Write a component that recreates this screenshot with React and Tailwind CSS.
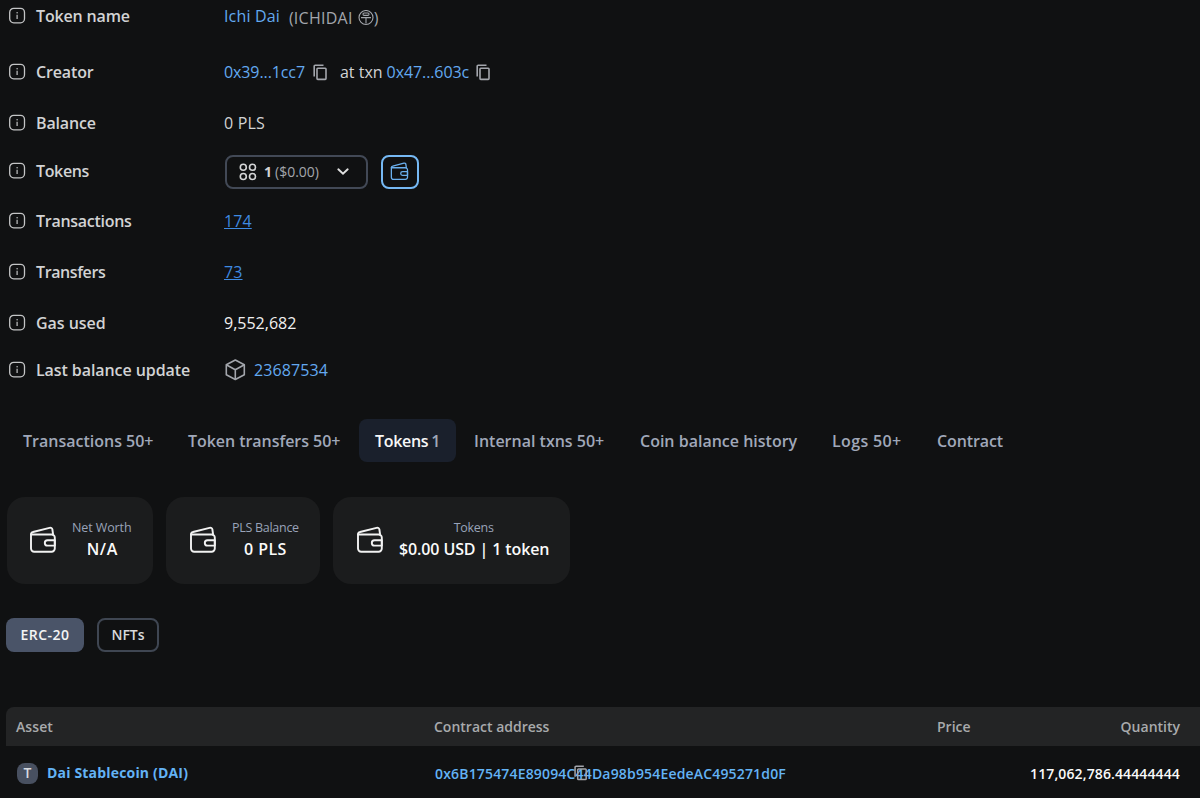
import React from 'react';

function InfoIcon() {
  return (
    <svg width="18" height="18" viewBox="0 0 18 18" fill="none" className="shrink-0">
      <rect x="1.7" y="1.4" width="14.8" height="14.4" rx="4" stroke="#c4c5c6" strokeWidth="1.3" />
      <path d="M9.1 7.8v4.2" stroke="#c4c5c6" strokeWidth="1.2" />
      <circle cx="9.1" cy="5.7" r="0.75" fill="#c4c5c6" />
    </svg>
  );
}

function WalletIcon({ className }) {
  return (
    <svg viewBox="0 0 28 28" fill="none" stroke="currentColor" strokeWidth="1.9" strokeLinejoin="round" strokeLinecap="round" className={className}>
      <path d="M2 8.500v14a3.200 3.200 0 0 0 3.200 3.200h17.400a3.200 3.200 0 0 0 3.200-3.200V11.700a3.200 3.200 0 0 0-3.200-3.200z" />
      <path d="M2 8.500C2 7 2.600 6.300 4 6L20.500 1.800c1.600-.4 2.700.3 2.900 1.700l.7 5" />
      <path d="M25.800 14.200h-7.300a2.700 2.700 0 0 0 0 5.400h7.300z" />
    </svg>
  );
}

function GridIcon() {
  return (
    <svg width="18" height="18" viewBox="0 0 18 18" fill="none" stroke="#d4d5d6" strokeWidth="1.6">
      <circle cx="4.300" cy="4.300" r="3" />
      <circle cx="13.500" cy="4.300" r="3" />
      <circle cx="4.300" cy="13.500" r="3" />
      <circle cx="13.500" cy="13.500" r="3" />
    </svg>
  );
}

function CubeIcon() {
  return (
    <svg width="22" height="24" viewBox="0 0 22 24" fill="none" stroke="#a3a6ac" strokeWidth="1.600" strokeLinejoin="round" strokeLinecap="round">
      <path d="M11.300 2 20.300 6.800v9.900L11.300 21.500 2.300 16.700V6.800z" />
      <path d="M2.700 7 11.300 11.700l8.600-4.700M11.300 11.700v9.500" />
    </svg>
  );
}

function SealIcon() {
  return (
    <svg width="16" height="16" viewBox="0 0 16 16" fill="none" stroke="#a3a6ac" strokeWidth="1.100">
      <circle cx="8" cy="7.500" r="7" />
      <rect x="5" y="3" width="6" height="2.400" rx="1.100" />
      <path d="M3 7.600h10M8 7.600v5.800" />
    </svg>
  );
}

function CopyIcon({ className }) {
  return (
    <svg viewBox="0 0 17 17" fill="none" stroke="#a3a6ac" strokeWidth="1.600" strokeLinejoin="round" className={className}>
      <path d="M11.500 1.300H3.200a1 1 0 0 0-1 1V12.500" />
      <rect x="5" y="4.200" width="9" height="11.200" rx="0.800" />
    </svg>
  );
}

function Row({ label, className, labelClass, children }) {
  return (
    <div className={`flex h-6 items-center pl-2 ${className}`}>
      <InfoIcon />
      <div className={`ml-2.5 w-[188px] shrink-0 whitespace-nowrap font-semibold text-[#d2d3d4] ${labelClass}`}>{label}</div>
      <div className="flex items-center whitespace-nowrap text-[#d2d3d4]">{children}</div>
    </div>
  );
}

function Tab({ className, children }) {
  return <div className={`mr-0.5 flex h-[43px] shrink-0 items-center whitespace-nowrap rounded-lg pl-4 text-[#a0a8b9] ${className}`}>{children}</div>;
}

function Card({ className, title, value, valueClass, titleClass }) {
  return (
    <div className={`flex h-[87px] items-center rounded-[18px] bg-[#1b1c1d] pb-[2px] ${className}`}>
      <WalletIcon className="size-7 shrink-0 text-[#f2f2f2]" />
      <div className="ml-[14px] flex flex-col items-center whitespace-nowrap">
        <div className={`text-[12.500px] leading-[20px] text-[#99a3b9] ${titleClass}`}>{title}</div>
        <div className={`leading-[23px] font-semibold text-[#fafafa] ${valueClass}`}>{value}</div>
      </div>
    </div>
  );
}

export default function App() {
  return (
    <div className="h-[798px] w-[1200px] overflow-hidden bg-[#101112] font-['Open_Sans','Noto_Sans',sans-serif] text-[16px] leading-6">
      <div className="flex flex-col pt-1">
        <Row label="Token name" className="" labelClass="tracking-[-0.15px]">
          <span className="tracking-[0.15px] text-[#63a9f0]">Ichi Dai</span>
          <span className="ml-[9px] flex items-center pt-[3px] text-[#a3a6ac]">
            <span className="mr-[5px] tracking-[0.25px]">(ICHIDAI</span>
            <SealIcon />
            <span>)</span>
          </span>
        </Row>
        <Row label="Creator" className="mt-8" labelClass="tracking-[-0.15px]">
          <span className="tracking-[-0.1px] text-[#63a9f0]">0x39...1cc7</span>
          <CopyIcon className="ml-[7px] size-[17px]" />
          <span className="ml-[11px]">at txn</span>
          <span className="ml-1 tracking-[-0.1px] text-[#63a9f0]">0x47...603c</span>
          <CopyIcon className="ml-[6px] size-[17px]" />
        </Row>
        <Row label="Balance" className="mt-[27px]" labelClass="tracking-[-0.15px]">
          <span className="tracking-[0.2px]">0 PLS</span>
        </Row>
        <Row label="Tokens" className="mt-[24px]" labelClass="tracking-[-0.35px]">
          <div className="ml-px flex h-[34px] w-[143px] translate-y-px items-center rounded-lg border-2 border-[#424956] pl-[12px] text-[14px]">
            <GridIcon />
            <span className="ml-[7px] font-bold">1</span>
            <span className="ml-[3px] text-[#a3a6ac]">($0.00)</span>
            <svg width="14" height="10" viewBox="0 0 14 10" fill="none" stroke="#e0e0e0" strokeWidth="1.900" strokeLinecap="round" className="ml-[17px]">
              <path d="m2.300 2.300 4.700 4.500 4.700-4.500" />
            </svg>
          </div>
          <div className="ml-[13px] flex h-[34px] w-[38px] translate-y-px items-center justify-center rounded-lg border-2 border-[#76b9f4]">
            <WalletIcon className="mr-0.5 mb-0.5 size-[19px] text-[#6bb0ee]" />
          </div>
        </Row>
        <Row label="Transactions" className="mt-[26px]" labelClass="tracking-[-0.28px]">
          <span className="tracking-[0.1px] text-[#3f8ae0] underline">174</span>
        </Row>
        <Row label="Transfers" className="mt-[27px]" labelClass="tracking-[-0.4px]">
          <span className="tracking-[0.1px] text-[#3f8ae0] underline">73</span>
        </Row>
        <Row label="Gas used" className="mt-[27px]" labelClass="tracking-[-0.05px]"><span className="text-[#f0f0f0]">9,552,682</span></Row>
        <Row label="Last balance update" className="mt-[23px]" labelClass="tracking-[-0.08px]">
          <CubeIcon />
          <span className="ml-2 tracking-[0.1px] text-[#63a9f0]">23687534</span>
        </Row>
      </div>

      <div className="mt-[37px] flex pl-[7px] font-semibold">
        <Tab className="w-[163px]">Transactions 50+</Tab>
        <Tab className="w-[185px] tracking-[-0.05px]">Token transfers 50+</Tab>
        <Tab className="w-[97px] bg-[#1a202c]">
          <span className="mr-[3px] tracking-[-0.3px] text-[#f7f7f7]">Tokens</span>
          <span>1</span>
        </Tab>
        <Tab className="w-[164px]">Internal txns 50+</Tab>
        <Tab className="w-[190px]">Coin balance history</Tab>
        <Tab className="w-[103px] tracking-[0.35px]">Logs 50+</Tab>
        <Tab className="w-[98px] tracking-[-0.1px]">Contract</Tab>
      </div>

      <div className="mt-[35px] flex pl-[7px]">
        <Card className="w-[146px] pl-[22px]" title="Net Worth" value="N/A" titleClass="tracking-[-0.1px] ml-px" valueClass="tracking-[0.6px] ml-0.5" />
        <Card className="ml-[13px] w-[154px] pl-[23px]" title="PLS Balance" value="0 PLS" titleClass="tracking-[-0.28px] ml-px" valueClass="tracking-[0.4px] ml-px" />
        <Card className="ml-[13px] w-[237px] pl-[23px]" title="Tokens" value="$0.00 USD | 1 token" titleClass="tracking-[-0.3px]" valueClass="tracking-[-0.12px] ml-px" />
      </div>

      <div className="mt-[34px] flex gap-[13px] pl-1.5 text-[14px] font-semibold">
        <div className="flex h-[34px] w-[78px] items-center justify-center rounded-lg bg-[#4a5468] tracking-[0.5px] text-[#f4f4f4]">ERC-20</div>
        <div className="flex h-[34px] w-[62px] items-center justify-center rounded-lg border-2 border-[#3f4652] text-[#d8d9da]">NFTs</div>
      </div>

      <div className="mt-[55px] ml-1.5 text-[14px] font-semibold">
        <div className="flex h-[39px] items-center rounded-tl-lg bg-[#232425] pr-5 pl-2.5 text-[#a8aaac]">
          <div className="w-[418px] tracking-[0.1px]">Asset</div>
          <div className="w-[503px]">Contract address</div>
          <div>Price</div>
          <div className="ml-auto">Quantity</div>
        </div>
        <div className="flex h-[54px] items-center pr-5 pl-[11px] whitespace-nowrap">
          <div className="flex size-[21px] items-center justify-center rounded-[8px] bg-[#485060] text-[14px] text-[#d8dbe0]">T</div>
          <div className="ml-[9px] w-[388px] font-bold tracking-[0.18px] text-[#63b3f5]">Dai Stablecoin (DAI)</div>
          <div className="relative pt-px text-[#63b3f5]">
            <span className="tracking-[0.17px]">0x6B175474E89094C44Da98b954EedeAC495271d0F</span>
            <CopyIcon className="absolute top-1 left-[138px] size-4" />
          </div>
          <div className="ml-auto pt-px tracking-[0.12px] text-[#fafafa]">117,062,786.44444444</div>
        </div>
      </div>
    </div>
  );
}
